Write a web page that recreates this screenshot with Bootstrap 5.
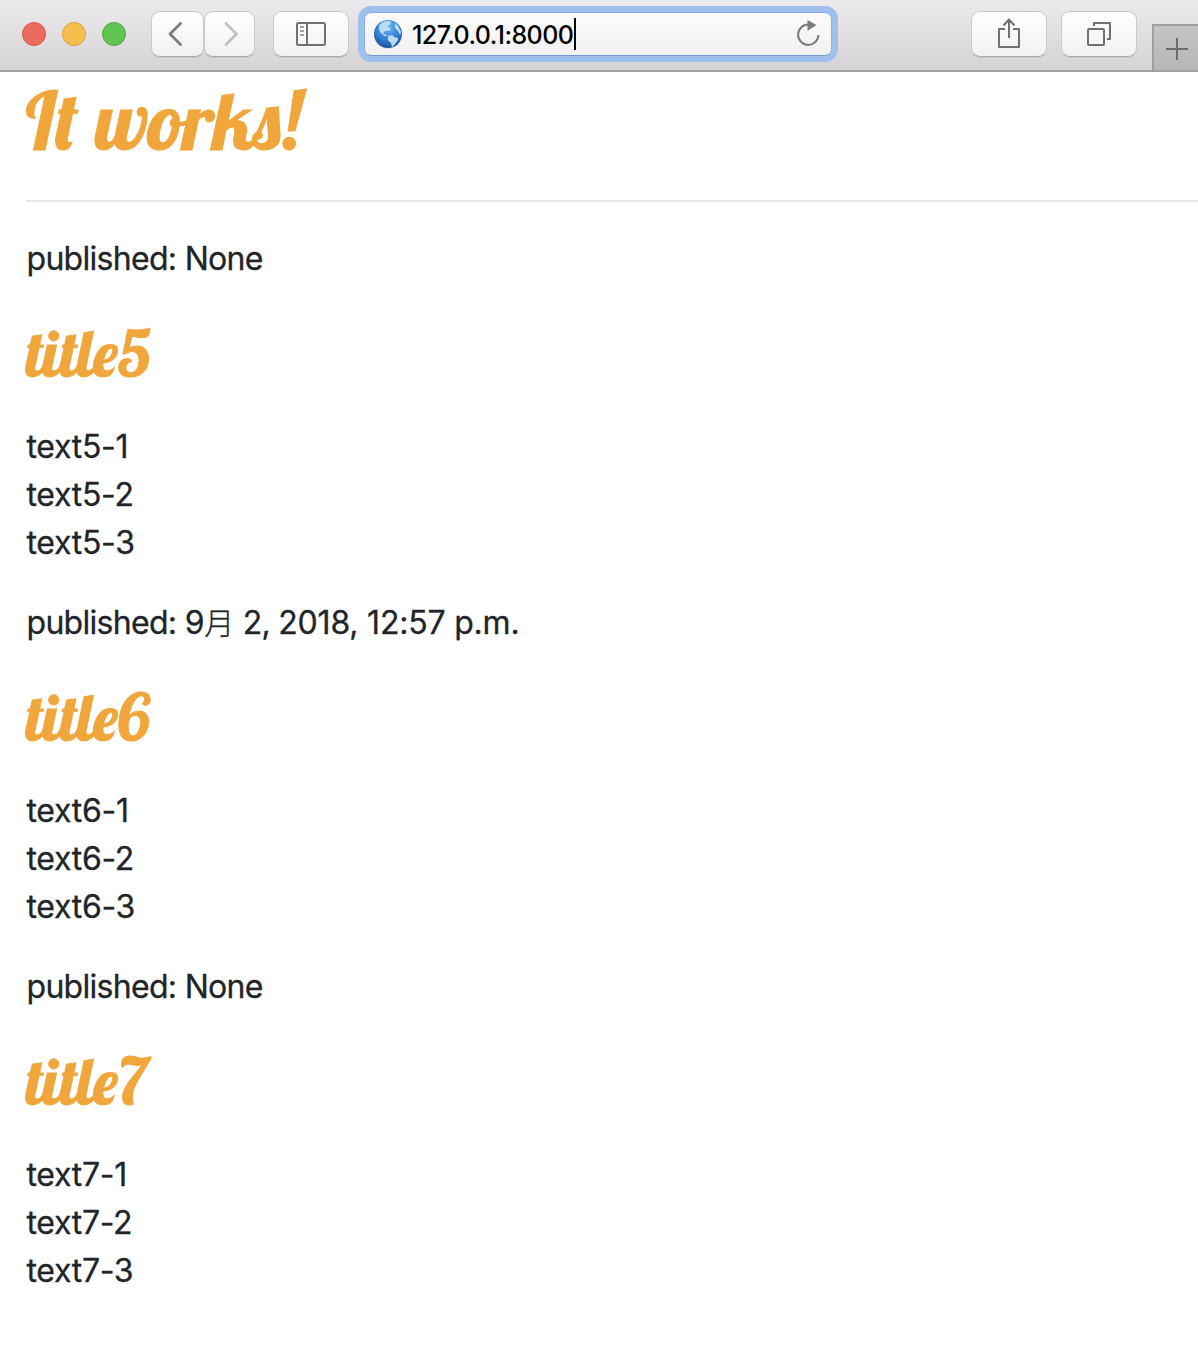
<!DOCTYPE html>
<html lang="ja">
<head>
<meta charset="utf-8">
<meta name="viewport" content="width=device-width, initial-scale=1">
<title>127.0.0.1:8000</title>
<link href="https://cdn.jsdelivr.net/npm/bootstrap@5.3.0/dist/css/bootstrap.min.css" rel="stylesheet">
<style>
body{font-family:Inter,"Noto Sans CJK JP",sans-serif;background:#fff;color:#212529;height:1348px;overflow:hidden}
.toolbar{height:72px;background:linear-gradient(#eceaed,#d5d3d6);border-bottom:2px solid #a09ea1;padding:11px 0 0 22px}
.light{width:24px;height:24px;border-radius:50%;border:1px solid;margin-right:16px;margin-top:11px}
.light-close{background:#ed6a5e;border-color:#d9544a}
.light-min{background:#f5bf4f;border-color:#d9a03c}
.light-max{background:#61c554;border-color:#4ca93c}
.tool{height:46px;padding:0;border:1px solid #cbc9cc;border-bottom-color:#aaa8ab;border-radius:9px;background:linear-gradient(#fff,#f1f1f1);box-shadow:0 1px 0 rgba(0,0,0,.08)}
.tool-back{width:53px;margin-left:9px}
.tool-forward{width:51px}
.tool-wide{width:76px}
.address{width:468px;height:44px;margin:1px 0 0 15px;border-radius:7px;background:linear-gradient(#fbfbfc,#f1f1f1);border:1px solid #86b0e6;border-bottom-color:#7298ca;box-shadow:0 0 0 6px #9fbfed;padding:0 10px 0 8px}
.address-text{font-size:25px;font-weight:450;color:#000;letter-spacing:-.56px;line-height:42px;margin-left:9px;padding-top:2px}
.caret{width:2px;height:32px;background:#000;margin-left:1px}
.newtab{width:46px;height:46px;margin-top:13px;background:linear-gradient(#c5c3c6,#b8b6b9);border:2px solid #a09ea1;border-width:2px 0 0 2px}
.page-body{padding-left:26px;font-size:32px;line-height:48px}
.page-body p{margin-bottom:32px;padding-left:.5px;letter-spacing:-.3px;-webkit-text-stroke:.3px #212529}
.page-body p.published{letter-spacing:-.7px}
.page-body p .month-mark{display:inline-block;font-size:30px;line-height:1;font-weight:300;letter-spacing:0;padding-left:.5px}
.page-body p .clock-part{letter-spacing:-.2px}
.script-face{font-family:Lobster,"Liberation Serif",serif;font-weight:500;color:#f0a63b;white-space:nowrap;-webkit-text-stroke:.9px #f0a63b}
h1.script-face{font-size:80px;line-height:96px;margin:0;-webkit-text-stroke-width:1px}
h2.script-face{font-size:64px;line-height:76px;margin:0 0 32px}
.page-body hr{margin:32px 0 33px;border-top:2px solid #e5e5e5;opacity:1}
</style>
<script src="https://cdn.jsdelivr.net/npm/bootstrap@5.3.0/dist/js/bootstrap.bundle.min.js"></script>
</head>
<body>
<header class="toolbar d-flex align-items-start">
  <span class="light light-close"></span><span class="light light-min"></span><span class="light light-max"></span>
  <button class="btn tool tool-back d-flex align-items-center justify-content-center flex-shrink-0" aria-label="Back"><svg width="20" height="30" fill="none" stroke="#7c7c7c" stroke-width="2.8" stroke-linecap="round" stroke-linejoin="round"><path d="M12.500 4.500 2 15 12.500 25.500"/></svg></button>
  <button class="btn tool tool-forward d-flex align-items-center justify-content-center flex-shrink-0" aria-label="Forward"><svg width="20" height="30" fill="none" stroke="#c2c2c2" stroke-width="2.800" stroke-linecap="round" stroke-linejoin="round"><path d="M6 4.500 16.500 15 6 25.500"/></svg></button>
  <button class="btn tool tool-wide d-flex align-items-center justify-content-center flex-shrink-0" style="margin-left:18px" aria-label="Sidebar"><svg width="30" height="24" fill="none" stroke="#717171" stroke-width="2"><rect x="1" y="1" width="28" height="22" rx="1.500"/><path d="M11 1v22"/><path d="M4 5h4M4 9h4M4 13h4" stroke="#a0a0a0"/></svg></button>
  <div class="address d-flex align-items-center flex-shrink-0">
    <svg width="30" height="30" viewBox="0 0 30 30">
      <defs><radialGradient id="sea" cx="50%" cy="25%" r="80%"><stop offset="0" stop-color="#65b6f3"/><stop offset=".55" stop-color="#3480d5"/><stop offset="1" stop-color="#174993"/></radialGradient></defs>
      <circle cx="15" cy="15.500" r="14" fill="#888" opacity=".35"/><circle cx="15" cy="15" r="14" fill="url(#sea)"/>
      <path d="M7 5 11 2.500 16 2 18 3 17 6 14 7 17 9 18 11 14 12 12 12 10 14 13 16 15 17 12 17 8 14 6 11 6 8Z M15 17 19 16 21 18 25 19 25 21 22 25 19 28.500 18 24 15 21Z M22 4 25 7 28 13 27 16 25 12 22 9Z" fill="#b9dcf4"/>
    </svg>
    <span class="address-text">127.0.0.1:8000</span><span class="caret"></span>
    <svg class="ms-auto" width="26" height="30" viewBox="0 0 26 30"><path d="M23.500 16A10.200 10.200 0 1 1 13.300 5.500" fill="none" stroke="#7c7c7c" stroke-width="2"/><path d="M12.500 1v11l9-6Z" fill="#7c7c7c"/></svg>
  </div>
  <button class="btn tool tool-wide d-flex align-items-center justify-content-center ms-auto flex-shrink-0" aria-label="Share"><svg width="26" height="32" fill="none" stroke="#717171" stroke-width="2" stroke-linejoin="round"><path d="M9 11H3v18h20V11h-6M13 20V1.500M7.500 7.500 13 1.500l5.500 6"/></svg></button>
  <button class="btn tool tool-wide d-flex align-items-center justify-content-center flex-shrink-0" style="margin-left:14px" aria-label="Tabs"><svg width="26" height="26" fill="none" stroke="#717171" stroke-width="2" stroke-linejoin="round"><rect x="2" y="8" width="16" height="16" rx="1"/><path d="M8 5V2h16v16h-3"/></svg></button>
  <div class="newtab flex-shrink-0" style="margin-left:15px"><svg class="d-block" width="44" height="44" stroke="#6b6b6b" stroke-width="2"><path d="M12 23h22M23 12v22"/></svg></div>
</header>
<main class="page-body">
  <h1 class="script-face">It works!</h1>
  <hr>
  <article><p class="published">published: None</p><h2 class="script-face">title5</h2><p>text5-1<br>text5-2<br>text5-3</p></article>
  <article><p class="published">published: 9<span class="month-mark">月</span> 2, <span class="clock-part">2018, 12:57 p.m.</span></p><h2 class="script-face">title6</h2><p>text6-1<br>text6-2<br>text6-3</p></article>
  <article><p class="published">published: None</p><h2 class="script-face">title7</h2><p>text7-1<br>text7-2<br>text7-3</p></article>
</main>
</body>
</html>
